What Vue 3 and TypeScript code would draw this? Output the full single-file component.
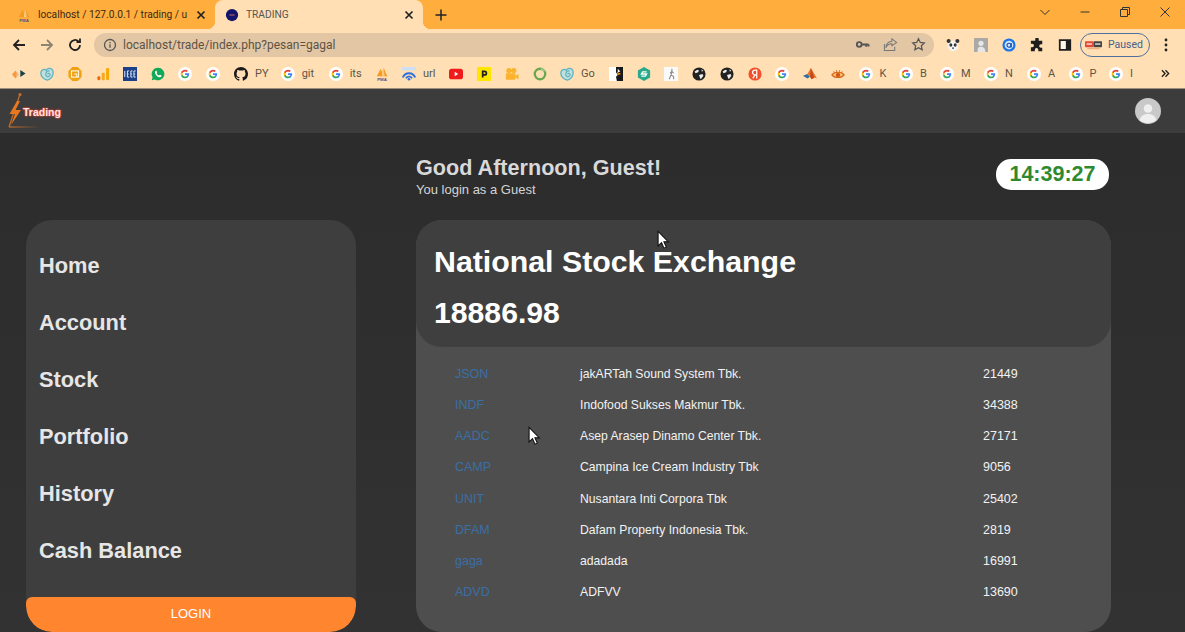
<script setup lang="ts">
interface Bookmark { icon: string; center: number; label?: string }
const bookmarks: Bookmark[] = [
  { icon: 'arrows', center: 19 }, { icon: 'cloud', center: 46.7 }, { icon: 'hex', center: 74.7 },
  { icon: 'bars', center: 102.7 }, { icon: 'ieee', center: 130 }, { icon: 'wa', center: 157.7 },
  { icon: 'g', center: 185 }, { icon: 'g', center: 213 }, { icon: 'github', center: 241, label: 'PY' },
  { icon: 'g', center: 287.7, label: 'git' }, { icon: 'g', center: 335.7, label: 'its' },
  { icon: 'pma', center: 381.7 }, { icon: 'wifi', center: 409, label: 'url' }, { icon: 'yt', center: 456 },
  { icon: 'p', center: 484 }, { icon: 'cam', center: 511.7 }, { icon: 'ring', center: 539.7 },
  { icon: 'cloud', center: 567, label: 'Go' }, { icon: 'bird', center: 616 }, { icon: 'sq', center: 643.7 },
  { icon: 'run', center: 671 }, { icon: 'globe', center: 699 }, { icon: 'globe', center: 727 },
  { icon: 'ya', center: 754.7 }, { icon: 'g', center: 782 }, { icon: 'mat', center: 810 },
  { icon: 'eye', center: 838 }, { icon: 'g', center: 865.7, label: 'K' }, { icon: 'g', center: 906, label: 'B' },
  { icon: 'g', center: 947, label: 'M' }, { icon: 'g', center: 991, label: 'N' }, { icon: 'g', center: 1034, label: 'A' },
  { icon: 'g', center: 1075.7, label: 'P' }, { icon: 'g', center: 1116, label: 'I' },
]
const bookmarkWidth = (i: number): number =>
  (i + 1 < bookmarks.length ? bookmarks[i + 1].center : 1157) - bookmarks[i].center

const menu = ['Home', 'Account', 'Stock', 'Portfolio', 'History', 'Cash Balance']
const stocks = [
  { code: 'JSON', name: 'jakARTah Sound System Tbk.', price: 21449 },
  { code: 'INDF', name: 'Indofood Sukses Makmur Tbk.', price: 34388 },
  { code: 'AADC', name: 'Asep Arasep Dinamo Center Tbk.', price: 27171 },
  { code: 'CAMP', name: 'Campina Ice Cream Industry Tbk', price: 9056 },
  { code: 'UNIT', name: 'Nusantara Inti Corpora Tbk', price: 25402 },
  { code: 'DFAM', name: 'Dafam Property Indonesia Tbk.', price: 2819 },
  { code: 'gaga', name: 'adadada', price: 16991 },
  { code: 'ADVD', name: 'ADFVV', price: 13690 },
]
</script>

<template>
  <div class="screen">
    <svg class="sprites" aria-hidden="true">
      <defs>
        <linearGradient id="logo-line" x1="0" y1="0" x2="1" y2="0">
          <stop offset="0" stop-color="#c7702a" /><stop offset="1" stop-color="#c7702a" stop-opacity="0" />
        </linearGradient>
        <symbol id="i-g" viewBox="0 0 16 16">
          <circle cx="8" cy="8" r="8" fill="#fff" />
          <g transform="translate(2.6 2.6) scale(.45)">
            <path fill="#4285F4" d="M22.56 12.25c0-.78-.07-1.53-.2-2.25H12v4.26h5.92c-.26 1.37-1.04 2.53-2.21 3.31v2.77h3.57c2.08-1.92 3.28-4.74 3.28-8.09z" />
            <path fill="#34A853" d="M12 23c2.97 0 5.46-.98 7.28-2.66l-3.57-2.77c-.98.66-2.23 1.06-3.71 1.06-2.86 0-5.29-1.93-6.16-4.53H2.18v2.84C3.99 20.53 7.7 23 12 23z" />
            <path fill="#FBBC05" d="M5.84 14.09c-.22-.66-.35-1.36-.35-2.09s.13-1.43.35-2.09V7.07H2.18C1.43 8.55 1 10.22 1 12s.43 3.45 1.18 4.93l3.66-2.84z" />
            <path fill="#EA4335" d="M12 5.38c1.62 0 3.06.56 4.21 1.64l3.15-3.15C17.45 2.09 14.97 1 12 1 7.7 1 3.99 3.47 2.18 7.07l3.66 2.84c.87-2.6 3.3-4.53 6.16-4.53z" />
          </g>
        </symbol>
        <symbol id="i-arrows" viewBox="0 0 16 16">
          <path fill="#f79a3e" d="M0 8.500l4-4.500 3 4.500-3 4.500z" /><path fill="#f3b880" d="M5 5l3 3.500-3 4z" /><path fill="#17444a" d="M9.500 3.500l6 4-6 4z" />
        </symbol>
        <symbol id="i-cloud" viewBox="0 0 16 16">
          <path fill="#bfe0dc" stroke="#62b3c2" stroke-width="1.500" d="M8 15C4 14 .7 10.500 1 6.500 1.500 3 5 1.500 7 4c1-2.800 5-3.200 7-1 1.800 2.500 1.200 8-2 10.200-1.200.9-2.800 1.800-4 1.800z" />
          <path fill="none" stroke="#62b3c2" stroke-width="1.400" d="M11 4.500C8.500 4 6.500 6 6.500 8.500s3 3.500 4.500 1.500-1-3.500-2.500-2" />
        </symbol>
        <symbol id="i-hex" viewBox="0 0 16 16">
          <path fill="#f0a010" d="M5 0h6l4.500 4.500v7L11 16H5L.5 11.500v-7z" />
          <path fill="none" stroke="#fff3cf" stroke-width="1.300" d="M4 4.500h8v7H4zM7 8h3v3.500" />
        </symbol>
        <symbol id="i-bars" viewBox="0 0 16 16">
          <rect x="1.500" y="10.500" width="3.500" height="4.500" rx="1.500" fill="#ef6c00" />
          <rect x="6.500" y="6.500" width="3.500" height="8.500" rx="1" fill="#f9a825" />
          <rect x="11.500" y="1" width="3.500" height="14" rx="1.500" fill="#f9ab00" />
        </symbol>
        <symbol id="i-ieee" viewBox="0 0 16 16">
          <rect width="16" height="16" fill="#1b3f88" />
          <path stroke="#e5ecf8" stroke-width="1.100" d="M2 4.500v7M5 4.500v7h2M5 8h1.500M5 4.500h2M9 4.500v7h2M9 8h1.500M9 4.500h2M12.500 4.500v7H14.500M12.500 8h1.500M12.500 4.500H14.500" fill="none" />
        </symbol>
        <symbol id="i-wa" viewBox="0 0 16 16">
          <path fill="#0fa958" d="M8 .8a7.200 7.200 0 0 0-6.200 10.900L.8 15.200l3.600-1A7.200 7.200 0 1 0 8 .8z" />
          <path fill="#fff" d="M5.600 4.200c-.8.500-1.300 1.600-.9 2.900.7 2.200 2.400 3.900 4.500 4.600 1.200.3 2.300-.1 2.700-1 .2-.5.200-.9.100-1l-1.800-.9-.9 1c-1.300-.5-2.300-1.500-2.900-2.800l.7-.8-.8-1.900c-.2-.1-.5-.2-.7-.1z" />
        </symbol>
        <symbol id="i-github" viewBox="0 0 16 16">
          <path fill="#1b1b1b" d="M8 0C3.580 0 0 3.580 0 8c0 3.540 2.290 6.530 5.470 7.590.4.070.55-.17.55-.38 0-.19-.01-.82-.01-1.490-2.010.37-2.530-.49-2.690-.94-.09-.23-.48-.94-.82-1.130-.28-.15-.68-.52-.01-.53.630-.01 1.080.58 1.230.82.720 1.210 1.870.87 2.330.66.070-.52.280-.87.510-1.070-1.780-.2-3.640-.89-3.640-3.950 0-.87.310-1.590.82-2.150-.08-.2-.36-1.020.08-2.120 0 0 .67-.21 2.200.82.640-.18 1.320-.27 2-.27s1.360.09 2 .27c1.530-1.040 2.200-.82 2.200-.82.440 1.100.16 1.920.08 2.120.51.560.82 1.270.82 2.150 0 3.070-1.870 3.750-3.650 3.950.29.250.54.730.54 1.480 0 1.070-.01 1.930-.01 2.200 0 .21.150.46.550.38A8.010 8.010 0 0 0 16 8c0-4.420-3.580-8-8-8z" />
        </symbol>
        <symbol id="i-pma" viewBox="0 0 16 16">
          <path fill="#f59a23" d="M2 10.500L6.500 2 8 6l2-5 4 9.500z" />
          <path fill="#fbc77a" d="M8 6l2-5 1 9.500H8z" />
          <text x="8" y="15.500" text-anchor="middle" font-family="Liberation Sans, sans-serif" font-size="5" font-weight="700" fill="#4a5a80">PMA</text>
        </symbol>
        <symbol id="i-wifi" viewBox="0 0 16 16">
          <rect width="16" height="4" fill="#cfe0f5" />
          <path fill="none" stroke="#2f6fe0" stroke-width="2.200" d="M1 12a7.500 7.500 0 0 1 14 0" />
          <path fill="none" stroke="#2f6fe0" stroke-width="1.800" d="M4.500 13a3.800 3.800 0 0 1 7 0" />
          <circle cx="8" cy="14" r="1.500" fill="#2f6fe0" />
        </symbol>
        <symbol id="i-yt" viewBox="0 0 16 16">
          <rect y="2" width="16" height="12" rx="3" fill="#f01c1c" /><path fill="#fff" d="M6.500 5.500l4 2.500-4 2.500z" />
        </symbol>
        <symbol id="i-p" viewBox="0 0 16 16">
          <rect width="16" height="16" fill="#ffe600" />
          <path fill="none" stroke="#222" stroke-width="2" d="M6.500 12V5h2.200a2 2 0 0 1 0 4H6.500" />
        </symbol>
        <symbol id="i-cam" viewBox="0 0 16 16">
          <circle cx="4.500" cy="4" r="3" fill="#fbb22c" /><circle cx="10" cy="4" r="3" fill="#fbb22c" />
          <rect x="1" y="7" width="11" height="7.500" rx="1" fill="#fbb22c" /><path fill="#fbb22c" d="M12 10l3.500-2v6L12 12z" />
        </symbol>
        <symbol id="i-ring" viewBox="0 0 16 16">
          <circle cx="8" cy="8" r="6" fill="none" stroke="#6aa84f" stroke-width="2.600" />
          <path fill="none" stroke="#9cc58a" stroke-width="2.600" d="M13 5a6 6 0 0 0-4-3" />
        </symbol>
        <symbol id="i-bird" viewBox="0 0 16 16">
          <rect width="16" height="16" fill="#fff" /><path fill="#181818" d="M8 0h8v16H9l-1-5 2-2-2-3z" />
          <path fill="#fff" d="M10 2l3 3-3 1z" /><path fill="#f39a1d" d="M9 5.500l5 2.500-4 1z" />
        </symbol>
        <symbol id="i-sq" viewBox="0 0 16 16">
          <path fill="#27a98a" d="M8 0l7 4v8l-7 4-7-4V4z" /><path fill="none" stroke="#fff" stroke-width="1.500" d="M11 5.500H6.500L5 8h6l-1.500 2.500H5" />
        </symbol>
        <symbol id="i-run" viewBox="0 0 16 16">
          <rect width="16" height="16" fill="#fafafa" /><path fill="none" stroke="#888" stroke-width="1.200" d="M9 2v3l-1 4-2 5M8 9l3 2v3M9 5l2 2M9 5L7 7" />
        </symbol>
        <symbol id="i-globe" viewBox="0 0 16 16">
          <circle cx="8" cy="8" r="7.500" fill="#222" />
          <path fill="#eee" d="M3 5l3-2 2 1-1 2-3 1zM8 9l4-1 1 2-3 4-1-2zM11 2.500l2 2-2 .5z" />
        </symbol>
        <symbol id="i-ya" viewBox="0 0 16 16">
          <circle cx="8" cy="8" r="7.500" fill="#f0502a" />
          <path fill="none" stroke="#fff" stroke-width="1.400" d="M10 13V3.500H8a2.500 2.500 0 0 0 0 5.500h2M8 9l-2.500 4" />
        </symbol>
        <symbol id="i-mat" viewBox="0 0 16 16">
          <path fill="#2f6f9f" d="M0 10l5-2 3 3-3 2z" /><path fill="#e9762b" d="M5 8l4-7 7 12-3-1-3 2-2-3z" /><path fill="#c44a1c" d="M9 1l-1 10 2 3 3-2z" />
        </symbol>
        <symbol id="i-eye" viewBox="0 0 16 16">
          <path fill="#f6c36a" stroke="#d8661a" stroke-width="1.300" d="M1 9c3-4 11-4 14 0-3 4-11 4-14 0z" />
          <circle cx="8" cy="9" r="2.500" fill="#d8541a" />
          <path stroke="#d8661a" stroke-width="1.100" d="M3 5l1 2M6 3.500l.5 2M10 3.500l-.5 2M13 5l-1 2" />
        </symbol>
      </defs>
    </svg>

    <div class="chrome">
      <div class="tabstrip">
        <div class="tab">
          <svg class="fav" viewBox="0 0 16 16"><use href="#i-pma" /></svg>
          <span class="tab-title">localhost / 127.0.0.1 / trading / u</span>
          <svg class="tab-x" viewBox="0 0 10 10"><path d="M1.500 1.500l7 7M8.500 1.500l-7 7" /></svg>
        </div>
        <div class="tab active">
          <svg class="fav" viewBox="0 0 16 16">
            <circle cx="8" cy="8" r="7" fill="#14146b" /><path d="M5 8h6" stroke="#e07a5a" />
          </svg>
          <span class="tab-title">TRADING</span>
          <svg class="tab-x" viewBox="0 0 10 10"><path d="M1.500 1.500l7 7M8.500 1.500l-7 7" /></svg>
        </div>
        <svg class="newtab" viewBox="0 0 12 12"><path d="M6 .5v11M.5 6h11" /></svg>
        <div class="winctl">
          <svg viewBox="0 0 12 12"><path d="M1.500 4l4.500 4.500L10.500 4" /></svg>
          <svg viewBox="0 0 12 12"><path d="M1.500 6h9" /></svg>
          <svg viewBox="0 0 12 12"><path d="M1.500 3.500h7v7h-7zM3.500 3.500v-2h7v7h-2" /></svg>
          <svg viewBox="0 0 12 12"><path d="M1.500 1.500l9 9M10.500 1.500l-9 9" /></svg>
        </div>
      </div>

      <div class="toolbar">
        <svg class="nav" viewBox="0 0 16 16"><path d="M14 8H3M8 3L3 8l5 5" /></svg>
        <svg class="nav dim" viewBox="0 0 16 16"><path d="M2 8h11M8 3l5 5-5 5" /></svg>
        <svg class="nav" viewBox="0 0 16 16"><path d="M13 8a5 5 0 1 1-1.500-3.600M13 1.500V5H9.500" /></svg>
        <div class="omnibox">
          <svg class="omni-i" viewBox="0 0 14 14">
            <circle cx="7" cy="7" r="5.500" /><path d="M7 6.200v3.600M7 4v1.200" />
          </svg>
          <span class="url">localhost/trade/index.php?pesan=gagal</span>
          <svg class="omni-r" viewBox="0 0 16 16">
            <circle cx="4.500" cy="8" r="2.500" fill="none" stroke="#555" stroke-width="2" /><path stroke="#555" stroke-width="2" d="M7 8h7.500M12 8v2.500M14.500 8v2" />
          </svg>
          <svg class="omni-r" viewBox="0 0 16 16">
            <path fill="none" stroke="#777" stroke-width="1.100" d="M1.500 7.500v7h11v-4M9.500 2l5 3.800-5 3.600V7.300C6 7.300 4 9 3 11.500c.2-4 2.500-6.500 6.500-7z" />
          </svg>
          <svg class="omni-r" viewBox="0 0 16 16">
            <path fill="none" stroke="#555" stroke-width="1.300" d="M8 1.800l1.900 4 4.300.5-3.200 3 .9 4.300L8 11.400l-3.900 2.200.9-4.300-3.200-3 4.300-.5z" />
          </svg>
        </div>
        <div class="ext">
          <svg viewBox="0 0 16 16">
            <circle cx="8" cy="9" r="6" fill="#f4f4f4" /><circle cx="3" cy="3.500" r="2.300" fill="#333" /><circle cx="13" cy="3.500" r="2.300" fill="#333" />
            <ellipse cx="5.500" cy="8" rx="1.700" ry="2" fill="#333" /><ellipse cx="10.500" cy="8" rx="1.700" ry="2" fill="#333" /><circle cx="8" cy="11.500" r="1" fill="#333" />
          </svg>
          <svg viewBox="0 0 16 16">
            <rect width="16" height="16" rx="1" fill="#a9a9a6" /><circle cx="8" cy="6" r="3" fill="#e6e6e6" /><path fill="#e6e6e6" d="M4 16c0-5 1-6 4-6s5 2 5 6z" />
          </svg>
          <svg viewBox="0 0 16 16">
            <circle cx="8" cy="8" r="7.500" fill="#1a73e8" /><circle cx="8" cy="8" r="5" fill="#cfe3fb" />
            <circle cx="8" cy="8.300" r="2.300" fill="none" stroke="#174ea6" stroke-width="1.300" /><path stroke="#174ea6" stroke-width="1.300" d="M10.500 5.800v5" />
          </svg>
          <svg viewBox="0 0 16 16">
            <path fill="#1e1e1e" d="M6 1.500a2 2 0 0 1 4 0V3h4v4h-1.500a2 2 0 0 0 0 4H14v4H9.500v-1.500a2 2 0 0 0-4 0V15H1v-4.500h1.500a2 2 0 0 0 0-4H1V3h5z" />
          </svg>
          <svg viewBox="0 0 16 16">
            <path fill="#fff6e8" d="M2 2h12v12H2z" /><path fill="#1e1e1e" d="M1 1.500h14v13H1zM3 3.500v9h6v-9z" fill-rule="evenodd" />
          </svg>
        </div>
        <div class="paused">
          <svg viewBox="0 0 22 12">
            <rect y="1" width="11" height="8" rx="1" fill="#e04a3a" /><rect x="11" y="1" width="11" height="8" rx="1" fill="#444" />
            <rect x="2" y="4" width="7" height="1.500" fill="#fff" /><rect x="13" y="4" width="7" height="1.500" fill="#fff" />
            <rect x="3" y="9.500" width="16" height="2" fill="#e9b27e" />
          </svg>
          <span>Paused</span>
        </div>
        <svg class="dots" viewBox="0 0 4 14"><circle cx="2" cy="2" r="1.400" /><circle cx="2" cy="7" r="1.400" /><circle cx="2" cy="12" r="1.400" /></svg>
      </div>

      <div class="bookmarks">
        <div v-for="(b, i) in bookmarks" :key="i" class="bm" :style="{ width: bookmarkWidth(i) + 'px' }">
          <svg class="bm-ico"><use :href="'#i-' + b.icon" /></svg>
          <span v-if="b.label" class="bm-label">{{ b.label }}</span>
        </div>
        <svg class="more" viewBox="0 0 10 10"><path d="M1 1.500L4.500 5 1 8.500M5 1.500L8.500 5 5 8.500" /></svg>
      </div>
    </div>

    <header class="topbar">
      <div class="logo">
        <svg class="logo-mark" viewBox="0 0 56 38">
          <path fill="none" stroke="#c7702a" stroke-width="1.200" d="M14 2L3 35" />
          <rect x="3" y="34.400" width="30" height="1.200" fill="url(#logo-line)" />
          <path fill="#e8771f" d="M11 9L3.500 22H9L5 33l10-15H9.500L14 9z" />
          <circle cx="14" cy="2.500" r="1.500" fill="#c7702a" />
        </svg>
        <span class="logo-text">Trading</span>
      </div>
      <svg class="avatar" viewBox="0 0 26 26">
        <circle cx="13" cy="13" r="13" fill="#c9c9c9" /><circle cx="13" cy="10.500" r="4.300" fill="#efefef" />
        <path fill="#efefef" d="M4.500 22c1.500-4.500 5-6 8.500-6s7 1.500 8.500 6a13 13 0 0 1-17 0z" />
      </svg>
    </header>

    <main class="page">
      <aside class="sidebar">
        <nav class="menu">
          <a v-for="item in menu" :key="item" class="menu-item">{{ item }}</a>
        </nav>
        <button class="login" type="button">LOGIN</button>
      </aside>

      <section class="content">
        <div class="greeting">
          <div>
            <h1>Good Afternoon, Guest!</h1>
            <p>You login as a Guest</p>
          </div>
          <div class="clock">14:39:27</div>
        </div>

        <div class="panel">
          <div class="panel-head">
            <h2>National Stock Exchange</h2>
            <div class="index">18886.98</div>
          </div>
          <div class="stock-list">
            <div v-for="s in stocks" :key="s.code" class="stock">
              <span class="code">{{ s.code }}</span>
              <span class="name">{{ s.name }}</span>
              <span class="price">{{ s.price }}</span>
            </div>
          </div>
        </div>
      </section>
    </main>

    <svg class="cursor c1" viewBox="0 0 12 18"><path d="M1 1v13.500l3.200-3 2.200 5 2.200-1-2.200-4.800H10.500z" /></svg>
    <svg class="cursor c2" viewBox="0 0 12 18"><path d="M1 1v13.500l3.200-3 2.200 5 2.200-1-2.200-4.800H10.500z" /></svg>
  </div>
</template>

<style>
html, body { margin: 0; background: #2e2e2e; overflow: hidden; }
</style>

<style scoped>
.screen {
  position: relative;
  width: 1185px;
  height: 632px;
  overflow: hidden;
  display: flex;
  flex-direction: column;
  font-family: "Liberation Sans", Arial, sans-serif;
  background: #2e2e2e;
}
.sprites { position: absolute; width: 0; height: 0; }

.chrome { background: #ffdfb3; font-family: Roboto, "Noto Sans", sans-serif; }
.tabstrip {
  height: 29px;
  background: #ffad3c;
  display: flex;
  align-items: center;
  padding-left: 7px;
}
.tab {
  width: 208px;
  height: 29px;
  box-sizing: border-box;
  display: flex;
  align-items: center;
  padding: 0 9px 0 10px;
  font-size: 10.200px;
  color: #3a2a14;
  position: relative;
}
.tab.active {
  background: #ffdfb3;
  border-radius: 8px 8px 0 0;
  color: #555;
}
.tab.active::before, .tab.active::after {
  content: "";
  position: absolute;
  bottom: 0;
  width: 8px;
  height: 8px;
}
.tab.active::before { left: -8px; background: radial-gradient(circle at 0 0, transparent 8px, #ffdfb3 8.5px); }
.tab.active::after { right: -8px; background: radial-gradient(circle at 100% 0, transparent 8px, #ffdfb3 8.5px); }
.fav { width: 14px; height: 14px; flex: none; }
.tab-title { flex: 1; margin-left: 7px; white-space: nowrap; }
.tab-x { width: 10px; height: 10px; flex: none; fill: none; stroke: #222; stroke-width: 1.700; }
.newtab { width: 12px; height: 12px; margin-left: 12px; fill: none; stroke: #222; stroke-width: 1.500; }
.winctl { margin-left: auto; display: flex; gap: 28px; padding-right: 14px; margin-top: -5px; }
.winctl svg { width: 12px; height: 12px; fill: none; stroke: #333; stroke-width: 1; }

.toolbar {
  height: 31px;
  box-sizing: border-box;
  display: flex;
  align-items: center;
  padding: 0 0 0 11px;
  gap: 12px;
}
.nav { width: 16px; height: 16px; flex: none; fill: none; stroke: #222; stroke-width: 1.800; }
.nav.dim { stroke: #8e8270; }
.omnibox {
  width: 840px;
  height: 24px;
  margin-left: -1px;
  border-radius: 12px;
  background: #e3c6a4;
  display: flex;
  align-items: center;
  padding: 0 8px 0 9px;
  box-sizing: border-box;
  flex: none;
}
.omni-i { width: 14px; height: 14px; fill: none; stroke: #555; stroke-width: 1.300; flex: none; }
.url { margin-left: 6px; font-size: 12px; color: #5c5346; flex: 1; }
.omni-r { width: 15px; height: 15px; margin-left: 13px; flex: none; }
.ext { display: flex; gap: 14px; }
.ext svg { width: 14px; height: 14px; }
.paused {
  margin-left: -4px;
  width: 70px;
  height: 24px;
  box-sizing: border-box;
  border: 1px solid #4f6f9e;
  border-radius: 12px;
  display: flex;
  align-items: center;
  gap: 6px;
  padding-left: 4px;
  font-size: 10.500px;
  color: #46618d;
}
.paused svg { width: 17px; height: 10px; }
.dots { width: 4px; height: 14px; fill: #222; margin-left: 2px; }

.bookmarks {
  height: 27px;
  padding-bottom: 1px;
  display: flex;
  align-items: center;
  padding-left: 12px;
  border-bottom: 1px solid #9c9080;
}
.bm { display: flex; align-items: center; flex: none; }
.bm-ico { width: 14px; height: 14px; flex: none; }
.bm-label { margin-left: 7px; font-size: 11px; color: #5d5548; }
.more { width: 9px; height: 9px; fill: none; stroke: #222; stroke-width: 1.500; margin-left: 11px; }

.topbar {
  height: 44px;
  flex: none;
  background: #3c3c3c;
  display: flex;
  align-items: center;
  justify-content: space-between;
  padding: 0 24px 0 6px;
}
.logo { position: relative; width: 56px; height: 38px; }
.logo-mark { width: 56px; height: 38px; display: block; }
.logo-text {
  position: absolute;
  left: 17px;
  top: 14px;
  font-size: 10.500px;
  font-weight: 700;
  color: #ffe5e0;
  text-shadow: 0 0 2px #e8473d, 0 0 2px #e8473d, 0 0 1px #e8473d;
}
.avatar { width: 26px; height: 26px; }

.page {
  flex: 1;
  display: flex;
  align-items: stretch;
  min-height: 0;
  padding-left: 26px;
  background: linear-gradient(#2c2c2c, #323232);
}
.sidebar {
  width: 330px;
  margin-top: 87px;
  margin-right: 60px;
  flex: none;
  background: #3e3e3e;
  border-radius: 26px;
  display: flex;
  flex-direction: column;
  justify-content: space-between;
  overflow: hidden;
}
.menu { display: flex; flex-direction: column; padding: 32px 13px 0; gap: 30px; }
.menu-item { font-size: 21.800px; line-height: 27px; font-weight: 700; color: #e6e6e6; }
.login {
  height: 35px;
  border: 0;
  border-radius: 6px 6px 26px 26px;
  background: #ff852f;
  color: #fff;
  font: 13px "Liberation Sans", Arial, sans-serif;
  padding: 0 0 2px;
}

.content { width: 695px; flex: none; display: flex; flex-direction: column; }
.greeting {
  height: 87px;
  box-sizing: border-box;
  display: flex;
  justify-content: space-between;
  align-items: flex-start;
  padding: 22px 2px 0 0;
  flex: none;
}
.greeting h1 { margin: 0; font-size: 21.600px; line-height: 25px; font-weight: 700; color: #d9d9d9; }
.greeting p { margin: 2px 0 0; font-size: 13px; line-height: 15px; color: #d4d4d4; }
.clock {
  margin-top: 4px;
  width: 113px;
  height: 31px;
  background: #fff;
  border-radius: 15px;
  color: #2f8a2f;
  font-size: 21.500px;
  font-weight: 700;
  line-height: 31px;
  text-align: center;
}
.panel {
  flex: 1;
  background: #4e4e4e;
  border-radius: 26px;
  overflow: hidden;
}
.panel-head {
  height: 127px;
  box-sizing: border-box;
  background: #3f3f3f;
  border-radius: 26px;
  padding: 23px 18px 0;
  color: #fff;
  font-weight: 700;
}
.panel-head h2 { margin: 0; font-size: 30.300px; line-height: 38px; }
.index { margin-top: 15px; font-size: 30.200px; line-height: 33px; }
.stock-list { padding: 11px 0 0 39px; }
.stock {
  height: 31.250px;
  display: flex;
  align-items: center;
  font-size: 12.500px;
  color: #f2f2f2;
}
.code { width: 125px; color: #3a6ea5; }
.name { width: 403px; font-size: 12.200px; }

.cursor { position: absolute; width: 13px; height: 20px; fill: #fff; stroke: #111; stroke-width: 1; }
.c1 { left: 657px; top: 230px; }
.c2 { left: 528px; top: 426px; }
</style>
